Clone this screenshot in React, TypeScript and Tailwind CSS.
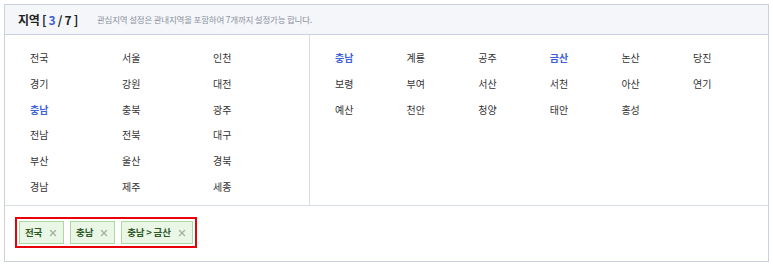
import { X } from 'lucide-react'

const mainRegions = [
  '전국', '서울', '인천',
  '경기', '강원', '대전',
  '충남', '충북', '광주',
  '전남', '전북', '대구',
  '부산', '울산', '경북',
  '경남', '제주', '세종',
]

const subRegions = [
  '충남', '계룡', '공주', '금산', '논산', '당진',
  '보령', '부여', '서산', '서천', '아산', '연기',
  '예산', '천안', '청양', '태안', '홍성',
]

const selectedSub = ['충남', '금산']
const tags = ['전국', '충남', '충남 > 금산']

const font = { fontFamily: '"Noto Sans CJK KR", "Noto Sans", sans-serif' }

export default function App() {
  return (
    <div className="bg-white pl-[4px] pt-[4px]" style={font}>
      <div className="w-[765px] border border-[#c9d1e0]">
        <div className="flex h-[30px] items-center border-b border-[#c9d1e0] bg-[#f4f6fa] pl-[13px]">
          <span className="text-[12px] font-bold tracking-[-0.3px] text-[#222]">
            지역 [ <span className="text-[#3d5fd9]">3</span> / 7 ]
          </span>
          <span className="ml-[19px] text-[8.5px] tracking-[-0.2px] text-[#8c919c]">
            관심지역 설정은 관내지역을 포함하여 7개까지 설정가능 합니다.
          </span>
        </div>

        <div className="flex h-[171px] border-b border-[#d6dce8]">
          <div className="w-[305px] border-r border-[#d6dce8] pl-[25px] pt-[10px]">
            <ul className="grid grid-cols-[92px_91px_91px]" role="list">
              {mainRegions.map((name, i) => (
                <li
                  key={i}
                  className={`h-[25.8px] leading-[25.8px] text-[10px] ${
                    i === 6 ? 'font-bold text-[#3d5fd9]' : 'text-[#333]'
                  }`}
                >
                  {name}
                </li>
              ))}
            </ul>
          </div>
          <div className="flex-1 pl-[25px] pt-[10px]">
            <ul className="grid grid-cols-[repeat(6,71.6px)]" role="list">
              {subRegions.map((name) => (
                <li
                  key={name}
                  className={`h-[25.8px] leading-[25.8px] text-[10px] ${
                    selectedSub.includes(name)
                      ? 'font-bold text-[#3d5fd9]'
                      : 'text-[#333]'
                  }`}
                >
                  {name}
                </li>
              ))}
            </ul>
          </div>
        </div>

        <div className="h-[55px] pl-[10px] pt-[11px]">
          <div className="inline-flex gap-[6px] border-2 border-[#e8000b] p-[2px]">
            {tags.map((t) => (
              <span
                key={t}
                className="flex h-[23px] items-center gap-[6px] border border-[#a9dba0] bg-[#eaf6e6] px-[5px] text-[9.5px] font-bold tracking-[-0.2px] text-[#2c5a26]"
              >
                {t}
                <X size={10} strokeWidth={3} className="text-[#9fb39a]" />
              </span>
            ))}
          </div>
        </div>
      </div>
    </div>
  )
}
